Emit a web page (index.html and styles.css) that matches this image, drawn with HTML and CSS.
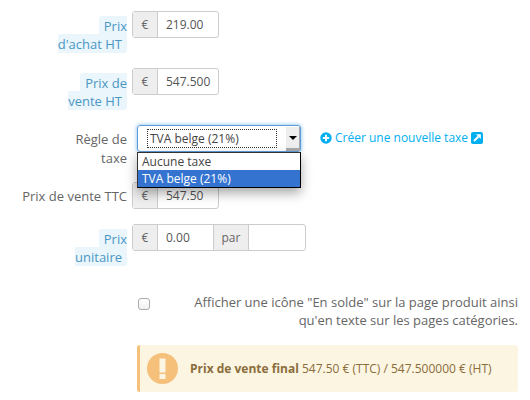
FILE: index.html
```html
<!DOCTYPE html>
<html lang="fr">
<head>
  <meta charset="UTF-8" />
  <title>Prix</title>
  <link rel="stylesheet" href="styles.css">
</head>
<body>
  <form class="prices">

    <div class="row">
      <div class="label"><span class="hint">Prix<br>d'achat HT</span></div>
      <div class="group">
        <span class="addon">€</span><span class="field">219.00</span>
      </div>
    </div>

    <div class="row">
      <div class="label"><span class="hint">Prix de<br>vente HT</span></div>
      <div class="group">
        <span class="addon">€</span><span class="field">547.500</span>
      </div>
    </div>

    <div class="row">
      <div class="label">Règle de<br>taxe</div>
      <div class="select-wrap">
        <div class="select">
          <span class="select-text">TVA belge (21%)</span>
          <span class="select-arrow"></span>
        </div>
        <ul class="options">
          <li>Aucune taxe</li>
          <li class="selected">TVA belge (21%)</li>
        </ul>
      </div>
      <a class="new-tax" href="#">
        <svg class="icon" viewBox="0 0 12 12"><circle cx="6" cy="6" r="5.7" fill="#00aff0"/><path d="M6 2.8v6.4M2.8 6h6.4" stroke="#fff" stroke-width="2"/></svg>
        Créer une nouvelle taxe
        <svg class="icon" viewBox="0 0 12 12"><rect width="12" height="12" rx="2" fill="#00aff0"/><path d="M5 2.2h4.8V7z" fill="#fff"/><path d="M7.5 4.5L3 9" stroke="#fff" stroke-width="2"/></svg>
      </a>
    </div>

    <div class="row">
      <div class="label">Prix de vente TTC</div>
      <div class="group">
        <span class="addon">€</span><span class="field">547.50</span>
      </div>
    </div>

    <div class="row">
      <div class="label"><span class="hint">Prix<br>unitaire</span></div>
      <div class="group">
        <span class="addon">€</span><span class="field field-price">0.00</span><span class="addon addon-par">par</span><span class="field field-unit"></span>
      </div>
    </div>

    <div class="sale-row">
      <input class="check" type="checkbox">
      <p>Afficher une icône "En solde" sur la page produit ainsi<br>qu'en texte sur les pages catégories.</p>
    </div>

    <div class="alert">
      <svg class="alert-icon" viewBox="0 0 31 31"><circle cx="15.5" cy="15.5" r="15.5" fill="#f5c07a"/><rect x="12.5" y="5.5" width="6" height="14" fill="#fcf5e2"/><rect x="12.5" y="21" width="6" height="5" fill="#fcf5e2"/></svg>
      <p><b>Prix de vente final</b> 547.50 € (TTC) / 547.500000 € (HT)</p>
    </div>

  </form>
</body>
</html>
```

FILE: styles.css
```css
body {
  margin: 0;
  font-family: "Open Sans", sans-serif;
  font-size: 12px;
  color: #666;
  background: #fff;
}
.prices {
  padding: 11px 12px 0 0;
}
.row {
  display: flex;
  align-items: flex-start;
  margin-bottom: 15px;
}
.label {
  width: 127px;
  padding-top: 5px;
  margin-right: 5px;
  text-align: right;
  font-size: 13px;
  line-height: 1.42857;
  flex: none;
}
.hint {
  padding: 0.5px 5px;
  color: #4b97c4;
  background: #eaf6fb;
  border-radius: 3px;
}
.group {
  display: flex;
  height: 27px;
  border: 1px solid #ccc;
  border-radius: 3px;
  box-sizing: border-box;
  line-height: 25px;
}
.addon {
  width: 24px;
  text-align: center;
  background: #eee;
  border-right: 1px solid #ccc;
}
.field {
  width: 60px;
  padding-left: 8px;
  box-sizing: border-box;
  color: #555;
}
.field-price {
  width: 55px;
}
.addon-par {
  width: 36px;
  border-left: 1px solid #ccc;
  border-right: 1px solid #ccc;
  box-sizing: border-box;
}
.field-unit {
  width: 56px;
}
.select-wrap {
  position: relative;
  width: 164px;
  margin-left: 5px;
}
.select {
  display: flex;
  justify-content: space-between;
  height: 27px;
  box-sizing: border-box;
  border: 1px solid #5b9dd9;
  border-radius: 3px;
  box-shadow: 0 0 4px #7db8ec;
  padding: 3px 0 0 9px;
}
.select-text {
  width: 130px;
  height: 19px;
  line-height: 17px;
  box-sizing: border-box;
  padding-left: 2px;
  border: 1px dotted #333;
  color: #444;
}
.select-arrow {
  position: relative;
  width: 14px;
  height: 24px;
  margin-top: -2px;
  box-sizing: border-box;
  background: #eee;
  border-right: 1px solid #aaa;
  border-bottom: 3px solid #aaa;
}
.select-arrow::after {
  content: "";
  position: absolute;
  left: 3px;
  top: 9px;
  border: 4px solid transparent;
  border-top: 4px solid #000;
  border-bottom: 0;
}
.options {
  position: absolute;
  z-index: 2;
  top: 27px;
  left: 0;
  width: 100%;
  box-sizing: border-box;
  margin: 0;
  padding: 0;
  list-style: none;
  background: #fff;
  border: 1px solid #333;
  border-right-color: #000;
  border-bottom-color: #000;
  box-shadow: 0 5px 12px rgba(0,0,0,0.35);
  line-height: 17px;
  color: #444;
}
.options li {
  padding-left: 4px;
}
.options .selected {
  background: #3474d0;
  color: #fff;
}
.new-tax {
  margin-left: 19px;
  padding-top: 4px;
  color: #00aff0;
  text-decoration: none;
  display: flex;
  align-items: center;
  gap: 3px;
}
.icon {
  width: 12px;
  height: 12px;
}
.sale-row {
  display: flex;
  align-items: flex-start;
  justify-content: space-between;
  margin: 26px 0 0 138px;
  font-size: 13px;
  line-height: 1.42857;
}
.sale-row p {
  margin: 0;
  text-align: right;
}
.check {
  appearance: none;
  width: 12px;
  height: 12px;
  margin: 5px 0 0;
  border: 1px solid #aaa;
  border-radius: 3px;
  background: linear-gradient(#fff, #f0f0f0);
}
.alert {
  display: flex;
  align-items: center;
  gap: 12px;
  height: 47px;
  margin: 15px 0 0 137px;
  padding-left: 7px;
  border-left: 3px solid #f5c07a;
  border-radius: 3px;
  background: #fcf5e2;
  color: #8a6d3b;
}
.alert p {
  margin: 0;
}
.alert-icon {
  width: 31px;
  height: 31px;
}
```
